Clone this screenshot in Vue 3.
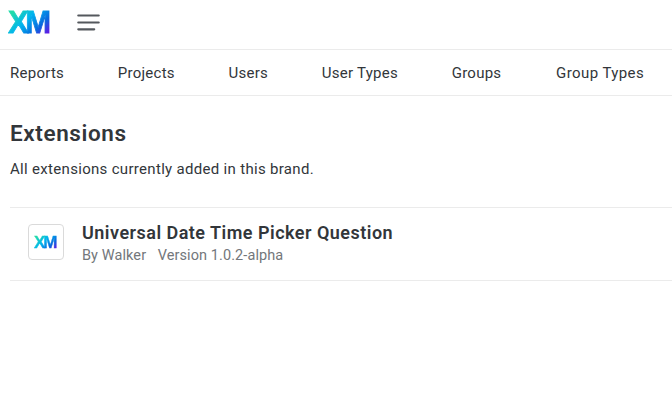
<script setup>
import { ref } from 'vue'

const tabs = ref([
   { id: 1, label: 'Reports' },
   { id: 2, label: 'Projects' },
   { id: 3, label: 'Users' },
   { id: 4, label: 'User Types' },
   { id: 5, label: 'Groups' },
   { id: 6, label: 'Group Types' },
])

const extensions = ref([
   {
      id: 1,
      name: 'Universal Date Time Picker Question',
      author: 'Walker',
      version: '1.0.2-alpha',
   },
])
</script>

<template>
   <div class="page">
      <header class="topbar">
         <span class="logo">XM</span>
         <button class="menu" aria-label="Menu">
            <svg width="24" height="18" viewBox="0 0 24 18">
               <path d="M1.3 2.5H21.7M1.3 9.5H21.7M1.3 16.3H17.2" />
            </svg>
         </button>
      </header>

      <nav class="tabs">
         <a v-for="tab in tabs" :key="tab.id" class="tab">{{ tab.label }}</a>
      </nav>

      <main class="content">
         <h1>Extensions</h1>
         <p class="intro">All extensions currently added in this brand.</p>

         <ul class="list">
            <li v-for="extension in extensions" :key="extension.id" class="row">
               <div class="thumb">
                  <span class="logo logo-small">XM</span>
               </div>
               <div class="info">
                  <h2>{{ extension.name }}</h2>
                  <div class="meta">
                     <span>By {{ extension.author }}</span>
                     <span>Version {{ extension.version }}</span>
                  </div>
               </div>
            </li>
         </ul>
      </main>
   </div>
</template>

<style>
body {
   overflow: hidden;
   background-color: #fff;
}
</style>

<style scoped>
.page {
   height: 100vh;
   overflow: hidden;
   background-color: #fff;
   color: #32363a;
   font-family: Roboto, 'Liberation Sans', sans-serif;
   font-size: 15px;
}

.topbar {
   box-sizing: border-box;
   height: 50px;
   padding: 0 0 5px 8px;
   display: flex;
   align-items: center;
   border-bottom: 1px solid #ebebeb;
}

.logo {
   width: 43px;
   padding-top: 2px;
   font-family: 'Liberation Sans', sans-serif;
   font-size: 31px;
   line-height: 36px;
   font-weight: 700;
   letter-spacing: -3.5px;
   white-space: nowrap;
   color: transparent;
   -webkit-text-stroke: 0.8px transparent;
   background: linear-gradient(135deg, #21dbaa 18%, #00b4ef 44%, #0768dd 68%, #5f1be5 86%);
   -webkit-background-clip: text;
   background-clip: text;
}

.menu {
   display: flex;
   margin-left: 26px;
   padding: 0;
   border: 0;
   background: none;
   cursor: pointer;
}

.menu path {
   fill: none;
   stroke: #54585d;
   stroke-width: 2.2;
   stroke-linecap: round;
}

.tabs {
   box-sizing: border-box;
   height: 46px;
   padding-left: 10px;
   display: flex;
   align-items: center;
   gap: 53.7px;
   border-bottom: 1px solid #ebebeb;
}

.tab {
   white-space: nowrap;
   letter-spacing: 0.26px;
}

.tab:last-child {
   margin-left: 1px;
   letter-spacing: 0.42px;
}

.content {
   padding: 23px 0 0 10px;
}

h1 {
   margin: 0;
   font-size: 22.5px;
   line-height: 28px;
   font-weight: 600;
   letter-spacing: 0.6px;
}

.intro {
   margin: 12px 0 0;
   line-height: 20px;
   letter-spacing: 0.31px;
}

.list {
   margin: 28px 0 0;
   padding: 0;
   list-style: none;
   border-top: 1px solid #ebebeb;
}

.row {
   box-sizing: border-box;
   height: 73px;
   padding: 13px 0 0 18px;
   display: flex;
   gap: 18px;
   border-bottom: 1px solid #ebebeb;
}

.thumb {
   box-sizing: border-box;
   width: 36px;
   height: 36px;
   margin-top: 3px;
   display: flex;
   align-items: center;
   justify-content: center;
   border: 1px solid #dadada;
   border-radius: 4px;
}

.logo-small {
   width: 24px;
   font-size: 17px;
   line-height: 20px;
   letter-spacing: -2px;
   -webkit-text-stroke-width: 0.4px;
}

h2 {
   margin: 0;
   font-size: 18px;
   line-height: 24px;
   font-weight: 600;
   letter-spacing: 0.48px;
}

.meta {
   margin-top: 1px;
   display: flex;
   gap: 11.5px;
   color: #73777b;
   font-size: 14.5px;
   line-height: 20px;
   letter-spacing: 0.09px;
}
</style>
